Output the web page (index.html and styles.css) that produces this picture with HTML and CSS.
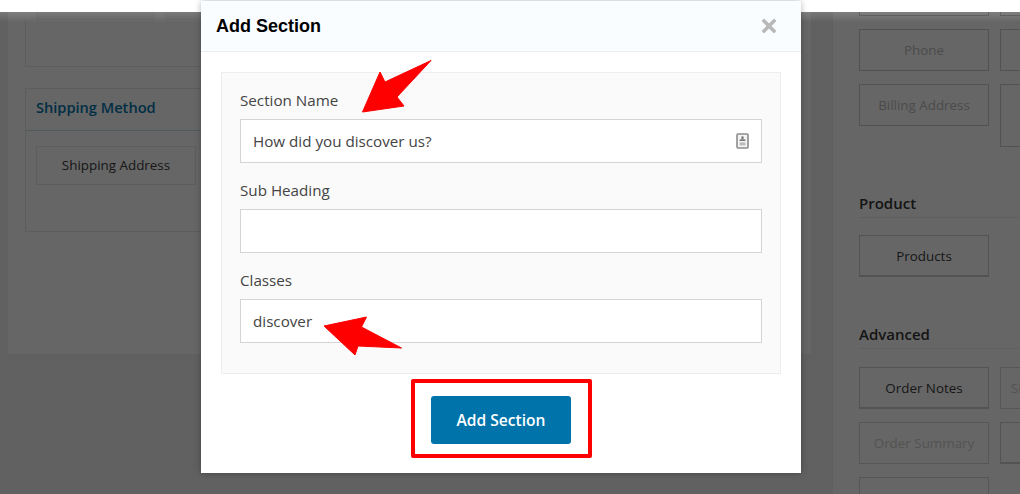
FILE: index.html
```html
<!DOCTYPE html>
<html lang="en">
<head>
<meta charset="utf-8">
<title>Add Section</title>
<link rel="stylesheet" href="styles.css">
</head>
<body>
<div class="topbar"></div>
<div class="page">
  <main class="left">
    <div class="stub-row"><span class="stub"></span><span class="stub"></span></div>
    <section class="box first"></section>
    <section class="box ship">
      <h3 class="ship-title">Shipping Method</h3>
      <div class="ship-body"><div class="ship-field">Shipping Address</div></div>
    </section>
  </main>
  <aside class="right">
    <div class="grid top">
      <div class="tile stubt"></div><div class="tile stubt"></div>
      <div class="tile off">Phone</div><div class="tile off"></div>
      <div class="tile off">Billing Address</div><div class="tile off tall"></div>
    </div>
    <h4 class="group product">Product</h4>
    <div class="grid"><div class="tile on">Products</div></div>
    <h4 class="group advanced">Advanced</h4>
    <div class="grid">
      <div class="tile on">Order Notes</div><div class="tile off faint">Shipping Address</div>
      <div class="tile off faint">Order Summary</div><div class="tile on"></div>
      <div class="tile off faint">Coupon</div>
    </div>
  </aside>
</div>
<div class="overlay"></div>
<div class="modal">
  <header class="modal-head">
    <h2 class="modal-title">Add Section</h2>
    <svg class="close" width="14" height="14" viewBox="0 0 14 14"><path d="M2 2 L12 12 M12 2 L2 12" fill="none" stroke="#b8b8b8" stroke-width="3.6" stroke-linecap="square"/></svg>
  </header>
  <div class="modal-body">
    <form class="fields">
      <label class="label">Section Name</label>
      <div class="input has-icon">How did you discover us?
        <svg class="contact" width="13" height="16" viewBox="0 0 13 16"><rect x="1" y="1" width="11" height="14" rx="1" fill="#f4f4f4" stroke="#8c8c8c" stroke-width="1.6"/><rect x="5.4" y="3.4" width="2.2" height="3" fill="#777"/><rect x="3.6" y="6.4" width="5.8" height="1.6" fill="#777"/><rect x="3.6" y="9.4" width="5.8" height="3" fill="#bbb"/></svg>
      </div>
      <label class="label">Sub Heading</label>
      <div class="input"></div>
      <label class="label">Classes</label>
      <div class="input">discover</div>
    </form>
    <div class="actions"><button class="submit" type="button">Add Section</button></div>
  </div>
  <svg class="arrow arrow-a" width="74" height="56" viewBox="0 0 74 56"><path d="M1.5 53 L19 13 L24 23 L70 1.5 L36 38 L43 47 Z" fill="#f00" stroke="#f00" stroke-width="1" stroke-linejoin="round"/></svg>
  <svg class="arrow arrow-b" width="80" height="42" viewBox="0 0 80 42"><path d="M1 10 L43.5 1 L38.5 11 L78.5 32 L35 30 L32 39 Z" fill="#f00" stroke="#f00" stroke-width="1" stroke-linejoin="round"/></svg>
  <div class="highlight"></div>
</div>
</body>
</html>
```
FILE: styles.css
```css
* { box-sizing: border-box; }
html, body { margin: 0; height: 100%; overflow: hidden; }
body { width: 1020px; height: 494px; background: #f1f1f1; font-family: "Open Sans", sans-serif; color: #444; position: relative; }
.topbar { height: 12px; background: #fff; }
.page { display: flex; height: 482px; overflow: hidden; padding-left: 8px; }
.left { width: 803px; height: 342px; background: #fff; padding-left: 17px; }
.stub-row { display: flex; gap: 10px; padding-left: 11px; height: 8px; }
.stub { width: 119px; height: 8px; border: 1px solid #f0f0f0; border-top: 0; background: #f6f6f6; }
.box { border: 1px solid #e8e8e8; margin-right: 20px; }
.first { height: 47px; border-top: 0; }
.ship { margin-top: 21px; height: 144px; }
.ship-title { margin: 0; height: 42px; padding: 0 10px; font-size: 14.6px; font-weight: 600; line-height: 37px; color: #0073aa; border-bottom: 1px solid #c6e2ee; }
.ship-body { padding: 15px 10px; }
.ship-field { width: 160px; height: 39px; border: 1px solid #e8e8e8; text-align: center; font-size: 13.4px; line-height: 37px; color: #3a3a3a; }
.right { margin-left: 22px; flex: 1; background: #fff; padding-left: 26px; overflow: hidden; }
.grid { display: grid; grid-template-columns: 130px 130px; gap: 13px 11px; }
.tile { height: 42px; border: 1px solid #ccc; text-align: center; font-size: 13.4px; line-height: 41px; color: #3a3a3a; white-space: nowrap; }
.tile.off { color: #bbb; }
.tile.faint { color: #d0d0d0; border-color: #d8d8d8; }
.tile.on { border-bottom-width: 2px; border-color: #d0d0d0; }
.tile.stubt { height: 4px; border-top: 0; margin-bottom: 0; }
.tile.tall { height: 63px; }
.group { margin: 0; font-size: 15px; font-weight: 600; line-height: 20px; color: #333; border-bottom: 1px solid #eee; height: 25px; }
.product { margin-top: 46px; margin-bottom: 17px; }
.advanced { margin-top: 47px; margin-bottom: 18px; }
.overlay { position: absolute; left: 0; right: 0; top: 12px; bottom: 0; background: linear-gradient(rgba(0,0,0,.5), rgba(0,0,0,.6) 10px); }
.modal { position: absolute; left: 201px; top: 1px; width: 600px; height: 472px; background: #fff; border-radius: 3px 3px 0 0; box-shadow: 0 0 6px rgba(0,0,0,.3); }
.modal-head { height: 51px; background: #f9fdff; border-bottom: 1px solid #eee; display: flex; align-items: center; justify-content: space-between; padding: 0 25px 0 15px; }
.modal-title { margin: 0; font: bold 18px "Liberation Sans", sans-serif; color: #000; }
.close { display: block; }
.modal-body { padding: 20px 20px 0; }
.fields { background: #fafafa; border: 1px solid #eee; height: 302px; padding: 17px 18px 0; }
.label { display: block; font-size: 15.2px; line-height: 20px; height: 29px; color: #444; }
.input { height: 44px; margin-bottom: 17px; background: #fff; border: 1px solid #d4d4d4; padding: 0 12px; font-size: 15.2px; line-height: 42px; color: #444; position: relative; }
.contact { position: absolute; right: 12px; top: 13px; }
.actions { display: flex; justify-content: center; margin-top: 22px; }
.submit { width: 140px; height: 48px; background: #0073aa; color: #fff; border: 0; border-radius: 3px; font: 600 15.6px "Open Sans", sans-serif; }
.arrow { position: absolute; }
.arrow-a { left: 160px; top: 58px; }
.arrow-b { left: 122px; top: 315px; }
.highlight { position: absolute; left: 210px; top: 378px; width: 181px; height: 79px; border: 4px solid #f00; border-radius: 2px; }
```
